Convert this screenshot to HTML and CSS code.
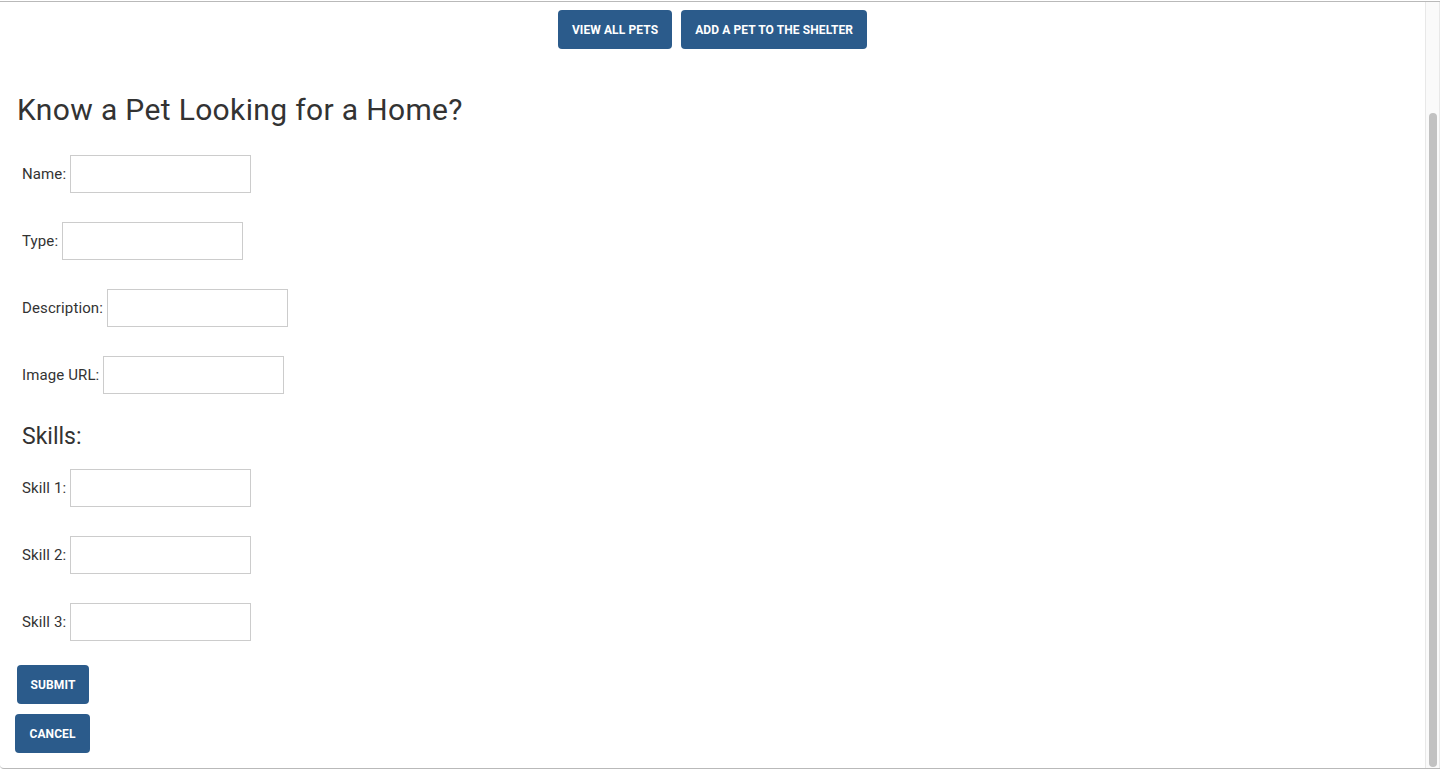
FILE: index.html
```html
<!DOCTYPE html>
<html lang="en">
<head>
<meta charset="utf-8">
<title>Pet Shelter</title>
<link rel="stylesheet" href="styles.css">
</head>
<body>
<div class="window">
  <main class="page">
    <nav class="nav">
      <a class="btn" href="#">View all pets</a>
      <a class="btn" href="#">Add a pet to the shelter</a>
    </nav>
    <h1 class="title">Know a Pet Looking for a Home?</h1>
    <form class="form">
      <div class="row"><label for="name">Name:</label><input id="name" type="text"></div>
      <div class="row"><label for="type">Type:</label><input id="type" type="text"></div>
      <div class="row"><label for="desc">Description:</label><input id="desc" type="text"></div>
      <div class="row"><label for="img">Image URL:</label><input id="img" type="text"></div>
      <h2 class="skills">Skills:</h2>
      <div class="row"><label for="s1">Skill 1:</label><input id="s1" type="text"></div>
      <div class="row"><label for="s2">Skill 2:</label><input id="s2" type="text"></div>
      <div class="row"><label for="s3">Skill 3:</label><input id="s3" type="text"></div>
      <div class="actions">
        <button class="btn submit" type="button">Submit</button>
        <button class="btn cancel" type="button">Cancel</button>
      </div>
    </form>
  </main>
  <div class="scrollbar"><div class="thumb"></div></div>
</div>
</body>
</html>
```

FILE: styles.css
```css
* { box-sizing: border-box; }
html, body { margin: 0; padding: 0; background: #fff; }
body {
  font-family: Roboto, "Liberation Sans", Arial, sans-serif;
  color: #333;
  overflow: hidden;
}
.window {
  margin-top: 1px;
  height: 768px;
  border-top: 1px solid #b9b9b9;
  border-bottom: 1px solid #b9b9b9;
  border-bottom-left-radius: 4px;
  display: flex;
  overflow: hidden;
}
.page {
  flex: 1;
  min-width: 0;
}
.nav {
  display: flex;
  justify-content: center;
  gap: 9px;
  padding-top: 8px;
}
.btn {
  display: inline-flex;
  align-items: center;
  justify-content: center;
  height: 39px;
  padding: 0 14px;
  background: #2b5b8b;
  color: #fff;
  border: none;
  border-radius: 4px;
  font-family: Roboto, "Liberation Sans", Arial, sans-serif;
  font-weight: 700;
  font-size: 12px;
  text-transform: uppercase;
  text-decoration: none;
  letter-spacing: 0.1px;
  cursor: pointer;
}
.title {
  margin: 43px 0 27px 17px;
  font-size: 30px;
  line-height: 36px;
  font-weight: 400;
  letter-spacing: 0.35px;
  color: #333;
}
.form {
  display: flex;
  flex-direction: column;
  padding-left: 22px;
}
.row {
  display: flex;
  align-items: center;
  gap: 4px;
  height: 38px;
  margin-bottom: 29px;
  font-size: 15px;
  letter-spacing: 0.12px;
}
.row input {
  width: 181px;
  height: 38px;
  border: 1px solid #ccc;
  border-radius: 0;
  padding: 6px 10px;
  font: inherit;
}
.skills {
  margin: 1px 0 19px 0;
  font-size: 23px;
  line-height: 26px;
  font-weight: 400;
  color: #333;
}
.actions {
  display: flex;
  flex-direction: column;
  align-items: flex-start;
  gap: 10px;
  margin-top: -5px;
}
.submit { margin-left: -5px; width: 72px; padding: 0; }
.cancel { margin-left: -7px; width: 75px; padding: 0; }
.scrollbar {
  width: 15px;
  flex: none;
  background: #fafafa;
  border-left: 1px solid #e8e8e8;
  border-right: 1px solid #e8e8e8;
  padding: 111px 2px 1px 3px;
}
.thumb {
  height: 100%;
  width: 8px;
  background: #c1c1c1;
  border-radius: 4px;
}
```
